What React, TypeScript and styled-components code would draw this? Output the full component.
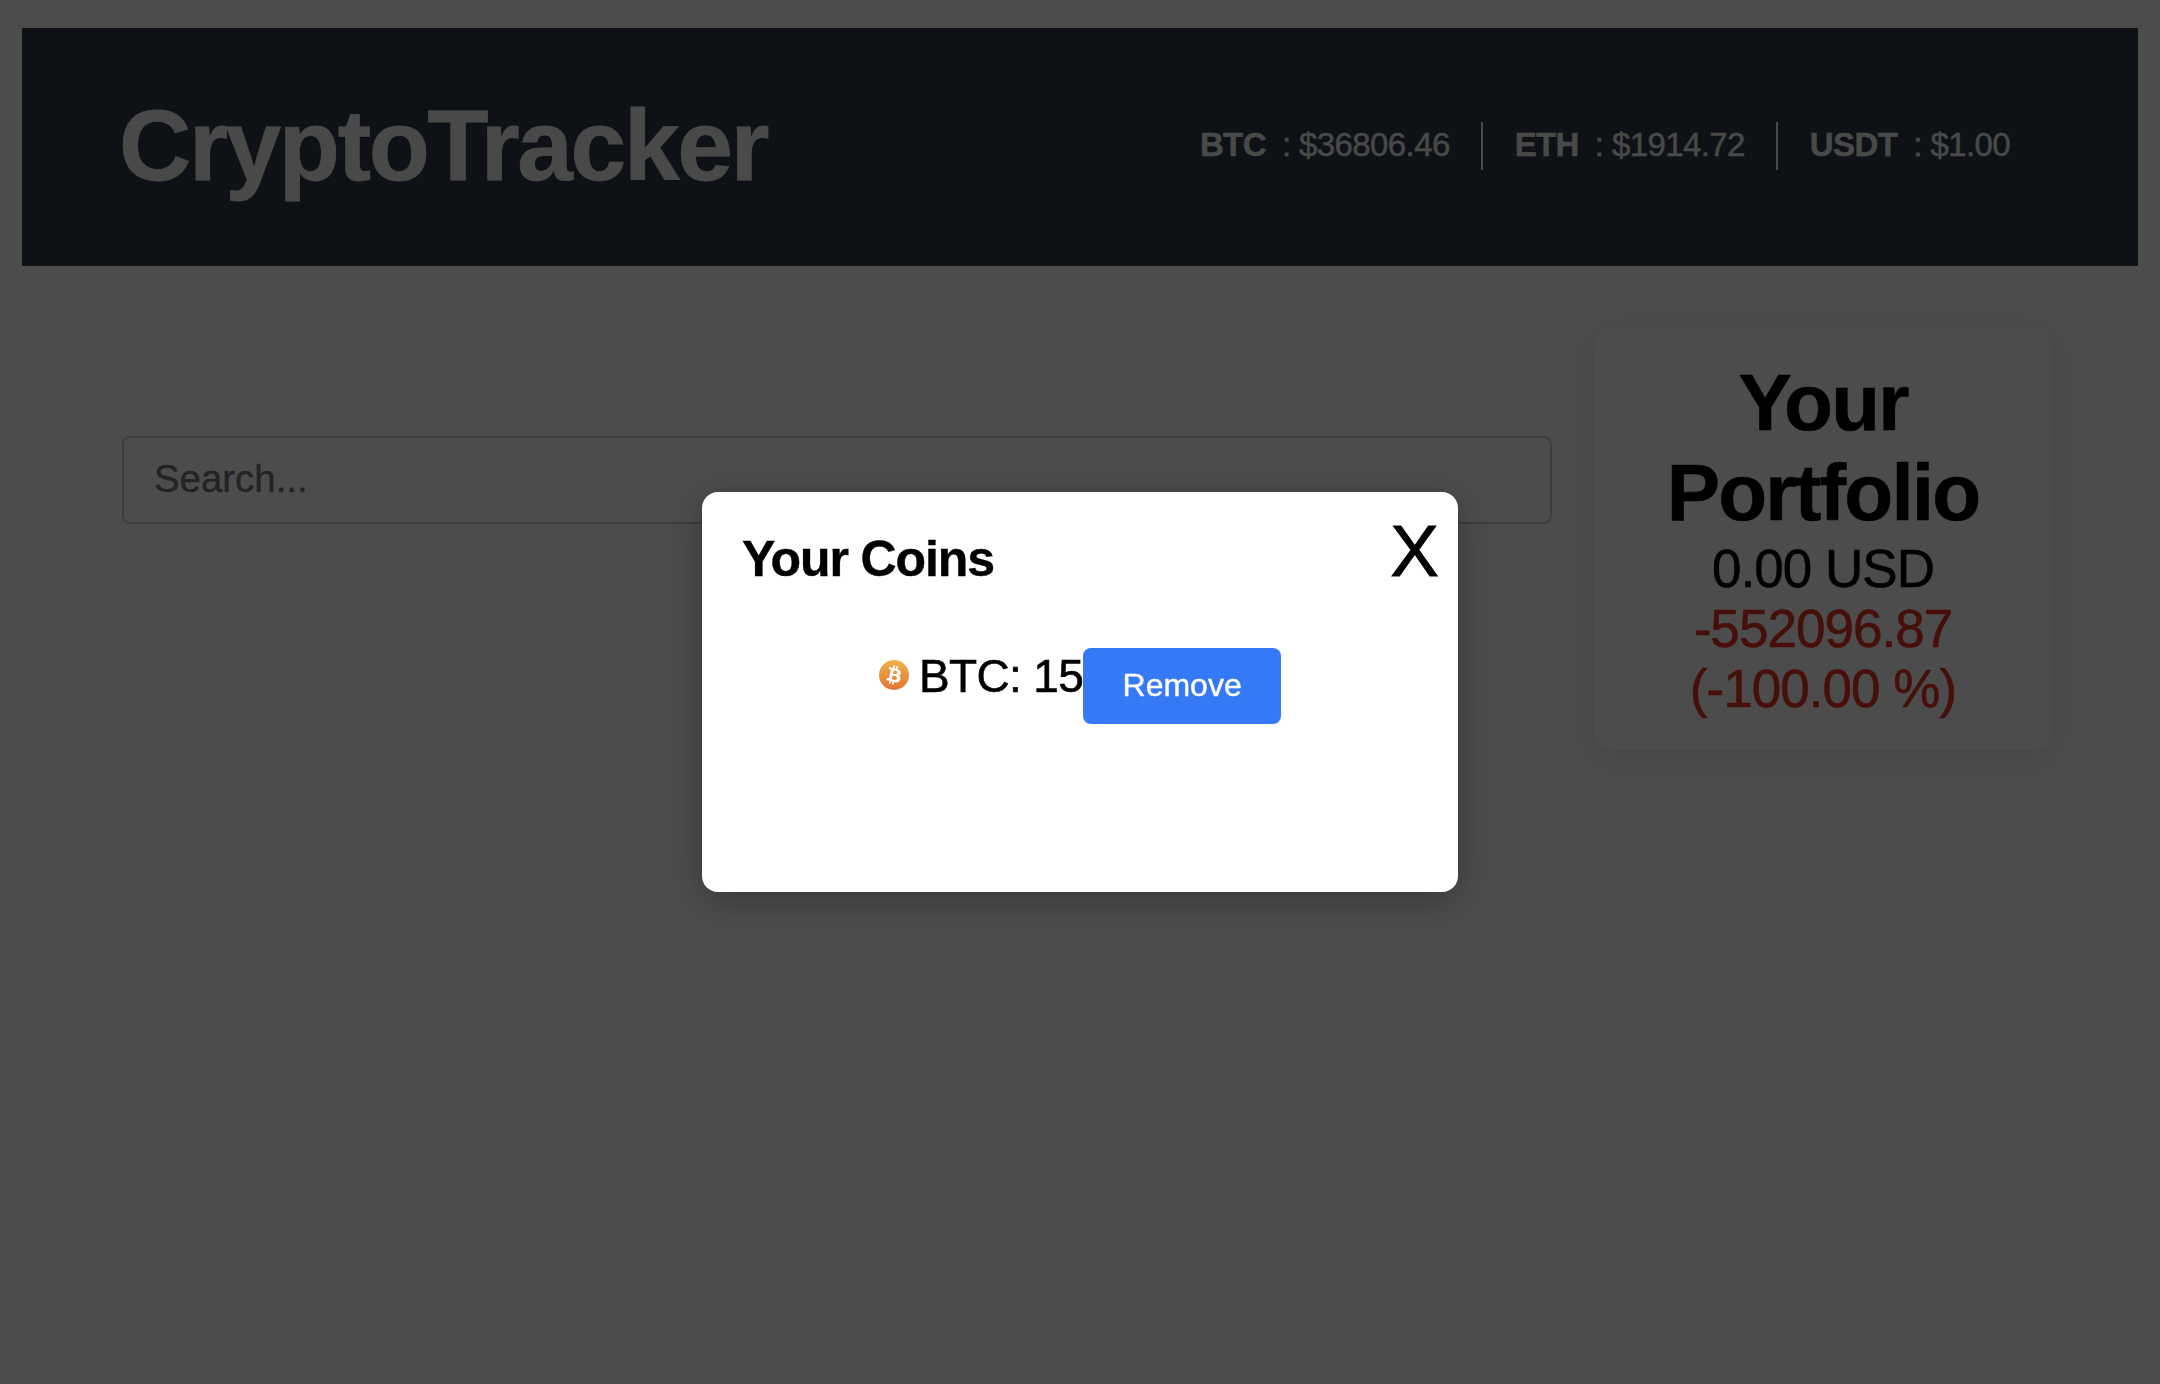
import React from "react";
import styled, { createGlobalStyle } from "styled-components";

const GlobalStyle = createGlobalStyle`
  *, *::before, *::after { box-sizing: border-box; }
  body {
    margin: 0;
    background: #ffffff;
    color: #000000;
    font-family: "Liberation Sans", Arial, Helvetica, sans-serif;
  }
  h1, h2, p { margin: 0; }
  button, input { font-family: inherit; }
`;

const Page = styled.div`
  min-height: 1384px;
  padding: 28px 22px 0;
`;

const Header = styled.header`
  display: flex;
  align-items: center;
  justify-content: space-between;
  height: 238px;
  padding: 0 97px 0 97px;
  background: #303b48;
  color: #f0f3f0;
`;

const Brand = styled.h1`
  margin-bottom: 4px;
  font-size: 100px;
  line-height: 112px;
  letter-spacing: -2.3px;
  font-weight: 700;
  -webkit-text-stroke: 0.8px currentColor;
`;

const Tickers = styled.ul`
  display: flex;
  list-style: none;
  margin: 0 0 2px;
  padding: 0;
`;

const Ticker = styled.li`
  display: flex;
  gap: 16px;
  height: 48px;
  padding: 0 31px 2px 32px;
  font-size: 33px;
  letter-spacing: -0.6px;
  line-height: 46px;
  -webkit-text-stroke: 0.4px currentColor;
  & + & { border-left: 2px solid #f0f3f0; }
`;

const Content = styled.main`
  display: flex;
  align-items: flex-start;
  justify-content: space-between;
  padding: 60px 86px 0 100px;
`;

const SearchInput = styled.input`
  width: 1430px;
  height: 88px;
  margin-top: 110px;
  padding: 0 30px 2px;
  border: 2px solid #cccccc;
  border-radius: 8px;
  background: #ffffff;
  font-size: 38.4px;
  -webkit-text-stroke: 0.4px currentColor;
  &::placeholder { color: #757575; opacity: 1; }
`;

const PortfolioCard = styled.section`
  width: 458px;
  padding: 32px;
  border-radius: 20px;
  background: #ffffff;
  box-shadow: 0 8px 40px rgba(0, 0, 0, 0.1);
  text-align: center;
`;

const PortfolioTitle = styled.h2`
  font-size: 80px;
  letter-spacing: -1.8px;
  line-height: 90px;
  -webkit-text-stroke: 0.6px currentColor;
`;

const Amount = styled.p<{ $loss?: boolean }>`
  padding-top: 2px;
  font-size: 53px;
  letter-spacing: -0.95px;
  line-height: 58px;
  -webkit-text-stroke: 0.6px currentColor;
  color: ${({ $loss }) => ($loss ? "#eb3323" : "#000000")};
`;

const Overlay = styled.div`
  position: fixed;
  inset: 0;
  display: flex;
  align-items: center;
  justify-content: center;
  background: rgba(0, 0, 0, 0.7);
`;

const Modal = styled.div`
  width: 756px;
  height: 400px;
  border-radius: 16px;
  background: #ffffff;
  box-shadow: 0 8px 40px rgba(0, 0, 0, 0.3);
`;

const ModalHeader = styled.div`
  display: flex;
  align-items: baseline;
  justify-content: space-between;
  height: 156px;
  padding: 18px 19px 0 40px;
`;

const ModalTitle = styled.h2`
  font-size: 50px;
  letter-spacing: -1.1px;
  line-height: 56px;
  -webkit-text-stroke: 0.4px currentColor;
`;

const CloseButton = styled.button`
  padding: 0;
  border: 0;
  background: none;
  color: #000000;
  font-size: 73px;
  line-height: 82px;
  -webkit-text-stroke: 0.9px currentColor;
`;

const CoinRow = styled.div`
  display: flex;
  align-items: flex-start;
  justify-content: center;
`;

const CoinIcon = styled.svg`
  width: 30px;
  height: 30px;
  margin: 12px 10px 0 0;
`;

const CoinLabel = styled.span`
  font-size: 46px;
  letter-spacing: -0.65px;
  line-height: 56px;
  -webkit-text-stroke: 0.6px currentColor;
`;

const RemoveButton = styled.button`
  width: 198px;
  height: 76px;
  padding: 0 0 2px;
  border: 0;
  border-radius: 8px;
  background: #3579f7;
  color: #ffffff;
  font-size: 32px;
  -webkit-text-stroke: 0.4px currentColor;
`;

const prices = [
  { symbol: "BTC", price: "36806.46" },
  { symbol: "ETH", price: "1914.72" },
  { symbol: "USDT", price: "1.00" },
];

function BitcoinIcon() {
  return (
    <CoinIcon viewBox="0 0 32 32" aria-hidden="true">
      <defs>
        <linearGradient id="coin" x1="0" y1="0" x2="0" y2="1">
          <stop offset="0" stopColor="#f1b24b" />
          <stop offset="1" stopColor="#e0742f" />
        </linearGradient>
      </defs>
      <circle cx="16" cy="16" r="16" fill="url(#coin)" />
      <path
        fill="#ffffff"
        transform="translate(-1 -0.8) scale(1.05)"
        d="M23.189 14.02c.314-2.096-1.283-3.223-3.465-3.975l.708-2.84-1.728-.43-.69 2.765c-.454-.114-.92-.22-1.385-.326l.695-2.783L15.596 6l-.708 2.839c-.376-.086-.746-.17-1.104-.26l.002-.009-2.384-.595-.46 1.846s1.283.294 1.256.312c.7.175.826.638.805 1.006l-.806 3.235c.048.012.11.03.18.057l-.183-.045-1.13 4.532c-.086.212-.303.531-.793.41.018.025-1.256-.313-1.256-.313l-.858 1.978 2.25.561c.418.105.828.215 1.231.318l-.715 2.872 1.727.43.708-2.84c.472.127.93.245 1.378.357l-.706 2.828 1.728.43.715-2.866c2.948.558 5.164.333 6.097-2.333.752-2.146-.037-3.385-1.588-4.192 1.13-.26 1.98-1.003 2.207-2.538zm-3.95 5.538c-.533 2.147-4.148.986-5.32.695l.95-3.805c1.172.293 4.929.872 4.37 3.11zm.535-5.569c-.487 1.953-3.495.96-4.47.717l.86-3.45c.975.243 4.118.696 3.61 2.733z"
      />
    </CoinIcon>
  );
}

export default function App() {
  return (
    <>
      <GlobalStyle />
      <Page>
        <Header>
          <Brand>CryptoTracker</Brand>
          <Tickers>
            {prices.map(({ symbol, price }) => (
              <Ticker key={symbol}>
                <strong>{symbol}</strong>
                <span>{`: $${price}`}</span>
              </Ticker>
            ))}
          </Tickers>
        </Header>
        <Content>
          <SearchInput placeholder="Search..." />
          <PortfolioCard>
            <PortfolioTitle>Your Portfolio</PortfolioTitle>
            <Amount>0.00 USD</Amount>
            <Amount $loss>-552096.87</Amount>
            <Amount $loss>(-100.00 %)</Amount>
          </PortfolioCard>
        </Content>
      </Page>
      <Overlay>
        <Modal role="dialog" aria-modal="true">
          <ModalHeader>
            <ModalTitle>Your Coins</ModalTitle>
            <CloseButton>X</CloseButton>
          </ModalHeader>
          <CoinRow>
            <BitcoinIcon />
            <CoinLabel>BTC: 15</CoinLabel>
            <RemoveButton>Remove</RemoveButton>
          </CoinRow>
        </Modal>
      </Overlay>
    </>
  );
}
